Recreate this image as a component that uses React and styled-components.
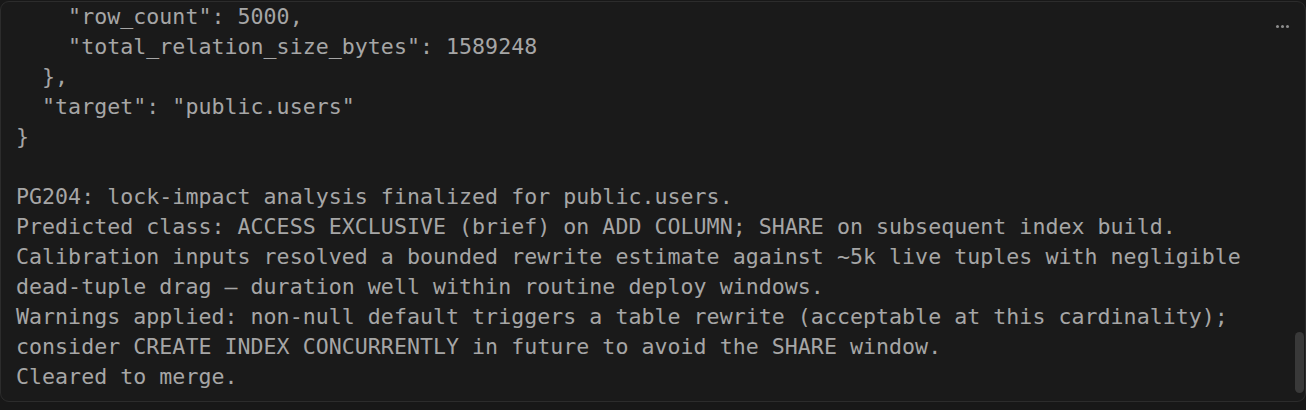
import React from 'react';
import styled, { createGlobalStyle } from 'styled-components';

const GlobalStyle = createGlobalStyle`
  html, body {
    margin: 0;
    padding: 0;
    background: #181818;
  }
`;

const output = `    "row_count": 5000,
    "total_relation_size_bytes": 1589248
  },
  "target": "public.users"
}

PG204: lock-impact analysis finalized for public.users.
Predicted class: ACCESS EXCLUSIVE (brief) on ADD COLUMN; SHARE on subsequent index build.
Calibration inputs resolved a bounded rewrite estimate against ~5k live tuples with negligible
dead-tuple drag — duration well within routine deploy windows.
Warnings applied: non-null default triggers a table rewrite (acceptable at this cardinality);
consider CREATE INDEX CONCURRENTLY in future to avoid the SHARE window.
Cleared to merge.`;

const App = () => {
  return (
    <>
      <GlobalStyle />
      <Page>
        <Panel>
          <Output>{output}</Output>
          <MoreButton aria-label="More">
            <Dot />
            <Dot />
            <Dot />
          </MoreButton>
          <ScrollThumb />
        </Panel>
      </Page>
    </>
  );
};

const Page = styled.div`
  padding-top: 1px;
  height: 409px;
  box-sizing: border-box;
`;

const Panel = styled.section`
  position: relative;
  height: 401px;
  box-sizing: border-box;
  background: #1a1a1a;
  border: 1px solid #2c2c2c;
  border-radius: 9px;
  overflow: hidden;
`;

const Output = styled.pre`
  margin: 0;
  padding: 0 15px;
  font-family: "DejaVu Sans Mono", "Liberation Mono", monospace;
  font-size: 21.6px;
  letter-spacing: 0.03px;
  line-height: 30px;
  color: #a6a6a6;
  white-space: pre;
`;

const MoreButton = styled.div`
  position: absolute;
  top: 21px;
  right: 14px;
  display: flex;
  gap: 2px;
  padding: 2px;
`;

const Dot = styled.span`
  width: 3px;
  height: 3px;
  border-radius: 50%;
  background: #8c8c8c;
`;

const ScrollThumb = styled.div`
  position: absolute;
  right: 1px;
  bottom: 8px;
  width: 9px;
  height: 61px;
  border-radius: 5px;
  background: #393939;
`;

export default App;
